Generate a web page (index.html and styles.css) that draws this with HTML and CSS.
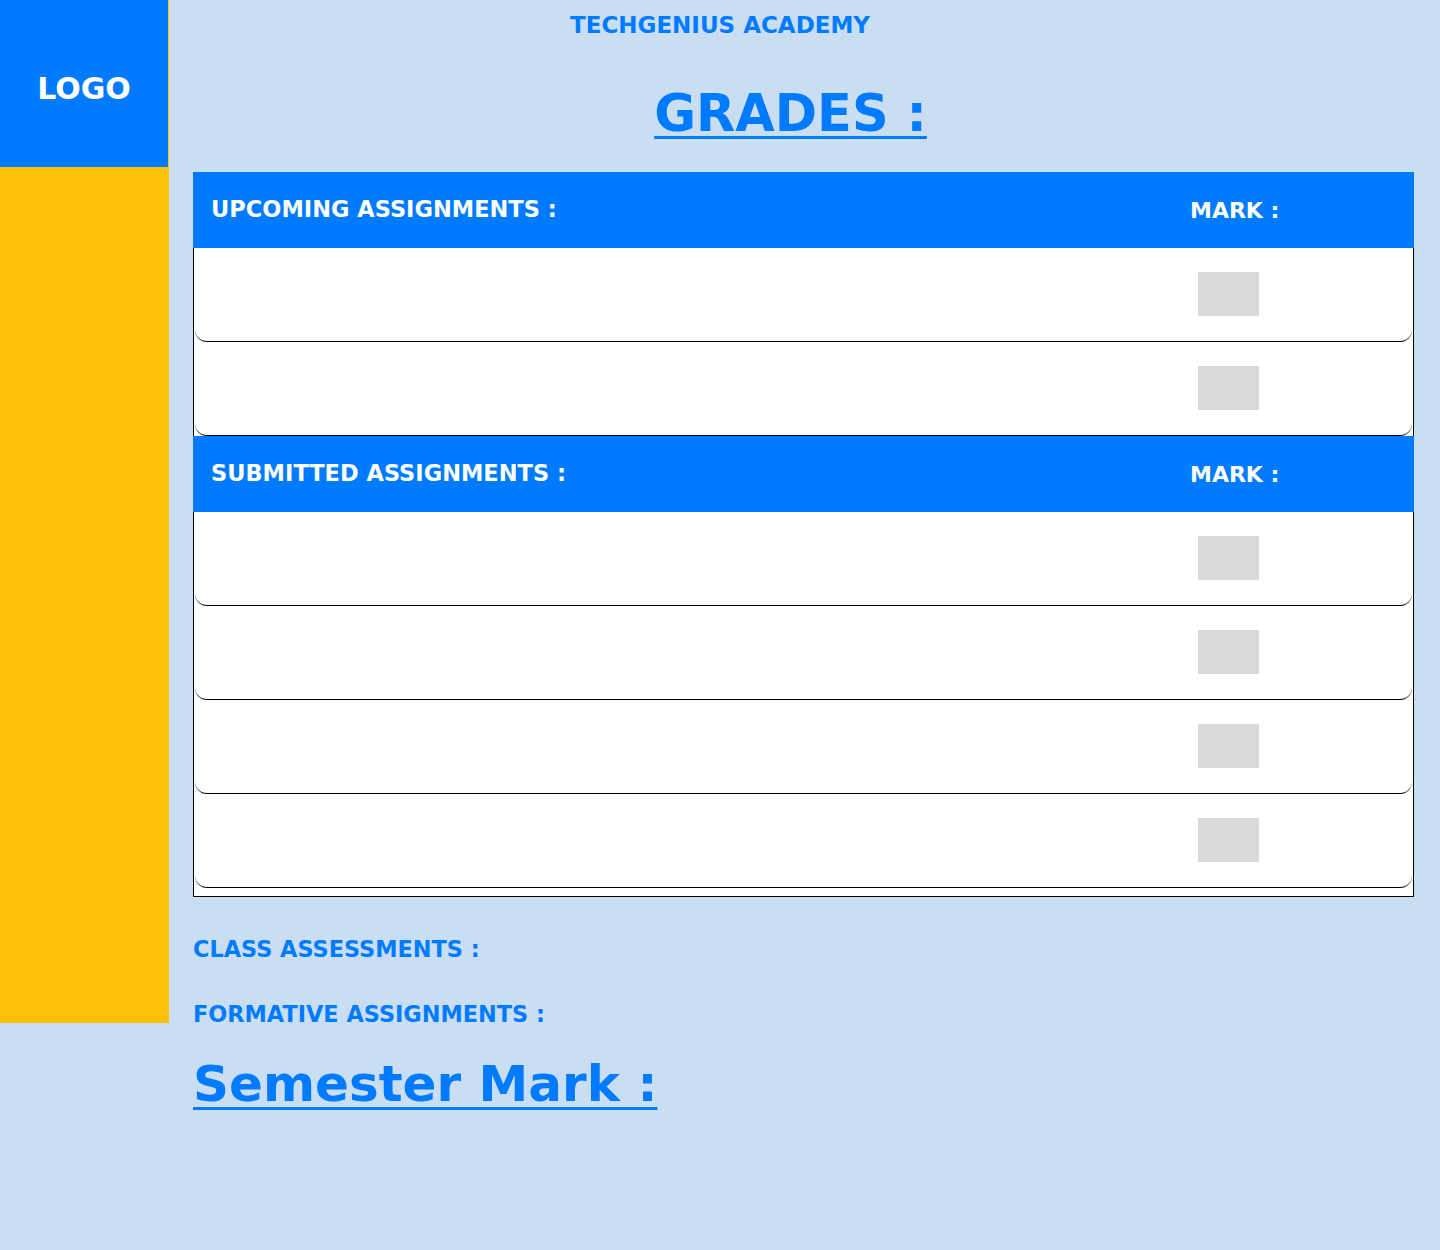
FILE: index.html
```html
<!DOCTYPE html>
<html lang="en">
<head>
<meta charset="utf-8">
<title>Grades - TechGenius Academy</title>
<link rel="stylesheet" href="styles.css">
</head>
<body>
<div class="page">
  <header class="topbar">TECHGENIUS ACADEMY</header>
  <aside class="sidebar">
    <div class="logo">LOGO</div>
  </aside>
  <main class="main">
    <h1 class="title">GRADES :</h1>
    <section class="grades">
      <div class="grades-head">
        <span>UPCOMING ASSIGNMENTS :</span>
        <span class="mark-label">MARK :</span>
      </div>
      <div class="grade-row"><span class="name"></span><span class="mark-box"></span></div>
      <div class="grade-row"><span class="name"></span><span class="mark-box"></span></div>
      <div class="grades-head">
        <span>SUBMITTED ASSIGNMENTS :</span>
        <span class="mark-label">MARK :</span>
      </div>
      <div class="grade-row"><span class="name"></span><span class="mark-box"></span></div>
      <div class="grade-row"><span class="name"></span><span class="mark-box"></span></div>
      <div class="grade-row"><span class="name"></span><span class="mark-box"></span></div>
      <div class="grade-row"><span class="name"></span><span class="mark-box"></span></div>
    </section>
    <p class="label label-class">CLASS ASSESSMENTS :</p>
    <p class="label label-formative">FORMATIVE ASSIGNMENTS :</p>
    <h2 class="semester">Semester Mark :</h2>
  </main>
</div>
</body>
</html>
```

FILE: styles.css
```css
* { box-sizing: border-box; }

html, body {
  margin: 0;
  padding: 0;
}

body {
  background: #c9def3;
  font-family: "DejaVu Sans", "Liberation Sans", sans-serif;
  font-weight: 700;
  color: #007bff;
  min-height: 1250px;
}

.page {
  display: grid;
  grid-template-columns: 169px 1fr;
  grid-template-rows: 48px auto;
}

.topbar {
  grid-column: 1 / -1;
  grid-row: 1;
  z-index: 1;
  height: 48px;
  line-height: 50px;
  text-align: center;
  font-size: 23px;
  color: #007bff;
}

.sidebar {
  grid-column: 1;
  grid-row: 1 / span 2;
  align-self: start;
  height: 1023px;
  background: #ffc107;
}

.logo {
  width: 168px;
  height: 167px;
  background: #007bff;
  color: #fff;
  font-size: 30px;
  display: flex;
  align-items: center;
  justify-content: center;
  padding-top: 10px;
}

.main {
  grid-column: 2;
  grid-row: 2;
  padding: 0 26px 0 24px;
}

.title {
  margin: 36px 0 28px -26px;
  font-size: 51px;
  line-height: 60px;
  text-align: center;
  text-decoration: underline;
  text-decoration-thickness: 3px;
  text-underline-offset: 5px;
}

.grades {
  width: 1221px;
  border: 1px solid #000;
  border-top: none;
  padding-bottom: 8px;
  background: #fff;
}

.grades-head {
  display: grid;
  grid-template-columns: 1fr 224px;
  align-items: center;
  height: 76px;
  margin: 0 -1px;
  padding: 0 0 3px 18px;
  background: #007bff;
  color: #fff;
  font-size: 22.5px;
}

.grades-head .mark-label {
  font-size: 22px;
  padding-top: 3px;
}

.grade-row {
  display: grid;
  grid-template-columns: 1fr 224px;
  align-items: center;
  height: 94px;
  margin: 0 1px;
  padding-bottom: 2px;
  background: #fff;
  border-bottom: 1px solid #000;
  border-radius: 0 0 12px 12px;
}

.mark-box {
  display: block;
  width: 61px;
  height: 44px;
  margin-left: 10px;
  background: #d9d9d9;
}

.label {
  margin: 0;
  font-size: 22.4px;
  line-height: 26px;
}

.label-class {
  margin-top: 39px;
}

.label-formative {
  margin-top: 39px;
}

.semester {
  margin: 27px 0 0;
  font-size: 50px;
  line-height: 60px;
  text-decoration: underline;
  text-decoration-thickness: 3px;
  text-underline-offset: 6px;
  display: inline-block;
}
```
